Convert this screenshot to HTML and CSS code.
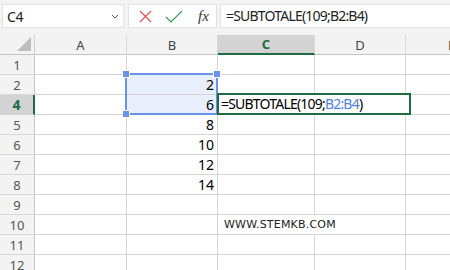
FILE: index.html
```html
<!DOCTYPE html>
<html lang="it">
<head>
  <meta charset="UTF-8">
  <title>SUBTOTALE</title>
  <link rel="stylesheet" href="styles.css">
</head>
<body>

  <div class="toolbar">
    <div class="namebox">
      <span>C4</span>
      <svg class="chevron" width="8" height="5" viewBox="0 0 8 5"><path d="M1 1 L4 4 L7 1" fill="none" stroke="#555" stroke-width="1"/></svg>
    </div>
    <div class="fxbox">
      <svg width="13" height="13" viewBox="0 0 13 13"><path d="M1 1 L12 12 M12 1 L1 12" stroke="#e8474f" stroke-width="1.1" fill="none"/></svg>
      <svg width="18" height="13" viewBox="0 0 18 13"><path d="M1 7 L6 12 L17 1" stroke="#2f9e55" stroke-width="1.1" fill="none"/></svg>
      <span class="fx">fx</span>
    </div>
    <div class="formula">=SUBTOTALE(109;B2:B4)</div>
  </div>

  <div class="sheet">
    <div class="grid">
      <div class="corner"></div>
      <div class="colhead">A</div>
      <div class="colhead">B</div>
      <div class="colhead active">C</div>
      <div class="colhead">D</div>
      <div class="colhead last">E</div>

      <div class="rowhead">1</div><div class="cell"></div><div class="cell"></div><div class="cell"></div><div class="cell"></div><div class="cell last"></div>
      <div class="rowhead">2</div><div class="cell"></div><div class="cell num sel">2</div><div class="cell"></div><div class="cell"></div><div class="cell last"></div>
      <div class="rowhead active">4</div><div class="cell"></div><div class="cell num sel">6</div><div class="cell"></div><div class="cell"></div><div class="cell last"></div>
      <div class="rowhead">5</div><div class="cell"></div><div class="cell num">8</div><div class="cell"></div><div class="cell"></div><div class="cell last"></div>
      <div class="rowhead">6</div><div class="cell"></div><div class="cell num">10</div><div class="cell"></div><div class="cell"></div><div class="cell last"></div>
      <div class="rowhead">7</div><div class="cell"></div><div class="cell num">12</div><div class="cell"></div><div class="cell"></div><div class="cell last"></div>
      <div class="rowhead">8</div><div class="cell"></div><div class="cell num">14</div><div class="cell"></div><div class="cell"></div><div class="cell last"></div>
      <div class="rowhead">9</div><div class="cell"></div><div class="cell"></div><div class="cell"></div><div class="cell"></div><div class="cell last"></div>
      <div class="rowhead">10</div><div class="cell"></div><div class="cell"></div><div class="cell site">WWW.STEMKB.COM</div><div class="cell last"></div>
      <div class="rowhead">11</div><div class="cell"></div><div class="cell"></div><div class="cell"></div><div class="cell"></div><div class="cell last"></div>
      <div class="rowhead">12</div><div class="cell"></div><div class="cell"></div><div class="cell"></div><div class="cell"></div><div class="cell last"></div>
    </div>

    <div class="range">
      <span class="handle tl"></span>
      <span class="handle tr"></span>
      <span class="handle bl"></span>
    </div>

    <div class="editor">=SUBTOTALE(109;<span class="ref">B2:B4</span>)</div>
  </div>

</body>
</html>
```

FILE: styles.css
```css
body {
  margin: 0;
  width: 450px;
  height: 270px;
  overflow: hidden;
  background-color: #ffffff;
  font-family: "Noto Sans", "Open Sans", sans-serif;
  color: #000;
}
.toolbar {
  display: flex;
  align-items: flex-start;
  height: 35px;
  padding-top: 4px;
  box-sizing: border-box;
  background-color: #f3f3f3;
}
.namebox {
  display: flex;
  align-items: center;
  justify-content: space-between;
  width: 122px;
  height: 24px;
  margin-left: 2px;
  padding: 0 4px 0 4px;
  box-sizing: border-box;
  background-color: #fff;
  border: 1px solid #e3e3e3;
  font-size: 14px;
  letter-spacing: -0.4px;
  color: #222;
}
.chevron {
  margin-top: 1px;
}
.fxbox {
  display: flex;
  align-items: center;
  width: 89px;
  height: 24px;
  margin-left: 4px;
  padding-left: 10px;
  box-sizing: border-box;
  gap: 13px;
  background-color: #fff;
  border: 1px solid #e3e3e3;
}
.fx {
  margin-left: 2px;
  font-family: "Liberation Serif", serif;
  font-style: italic;
  font-size: 15px;
  color: #333;
}
.formula {
  flex: 1;
  height: 24px;
  margin-left: 3px;
  padding-left: 5px;
  box-sizing: border-box;
  background-color: #fff;
  border: 1px solid #e3e3e3;
  border-right: none;
  font-size: 14px;
  letter-spacing: -0.8px;
  line-height: 22px;
  color: #222;
}
.sheet {
  position: relative;
}
.grid {
  display: grid;
  grid-template-columns: 35px 92px 91px 97px 91px 91px;
  grid-auto-rows: 20px;
}
.corner {
  position: relative;
  background-color: #f3f3f3;
  border-right: 1px solid #d0d0d0;
  border-bottom: 1px solid #c4c4c4;
}
.corner::after {
  content: "";
  position: absolute;
  right: 3px;
  bottom: 3px;
  border-left: 14px solid transparent;
  border-bottom: 14px solid #bdbdbd;
}
.colhead {
  display: flex;
  align-items: center;
  justify-content: center;
  background-color: #f3f3f3;
  border-right: 1px solid #d8d8d8;
  border-bottom: 1px solid #c4c4c4;
  font-size: 13px;
  color: #444;
}
.colhead.active {
  background-color: #d3d3d3;
  border-bottom: 2px solid #1d6b40;
  color: #1d6b40;
  font-weight: bold;
}
.rowhead {
  display: flex;
  align-items: center;
  justify-content: center;
  background-color: #f3f3f3;
  border-right: 1px solid #c4c4c4;
  border-bottom: 1px solid #d8d8d8;
  font-size: 13px;
  color: #555;
}
.rowhead.active {
  background-color: #d3d3d3;
  border-right: 2px solid #1d6b40;
  color: #1d6b40;
  font-weight: bold;
  font-size: 14px;
}
.cell {
  border-right: 1px solid #d4d4d4;
  border-bottom: 1px solid #d4d4d4;
  font-size: 14px;
  line-height: 20px;
}
.last {
  border-right: none;
}
.num {
  text-align: right;
  padding-right: 3px;
}
.sel {
  background-color: #e8eefb;
}
.site {
  grid-column: span 2;
  padding-left: 6px;
  font-family: "DejaVu Sans", sans-serif;
  font-size: 11px;
  color: #222;
  letter-spacing: 0.2px;
}
.range {
  position: absolute;
  left: 125px;
  top: 38px;
  width: 93px;
  height: 42px;
  box-sizing: border-box;
  border: 2px solid #6892eb;
}
.handle {
  position: absolute;
  width: 6px;
  height: 6px;
  background-color: #6892eb;
  border: 1px solid #fff;
}
.handle.tl {
  left: -5px;
  top: -5px;
}
.handle.tr {
  right: -5px;
  top: -5px;
}
.handle.bl {
  left: -5px;
  bottom: -5px;
}
.editor {
  position: absolute;
  left: 217px;
  top: 58px;
  width: 194px;
  height: 22px;
  padding-left: 2px;
  box-sizing: border-box;
  background-color: #fff;
  border: 2px solid #1d6b40;
  font-size: 14px;
  letter-spacing: -0.8px;
  line-height: 18px;
  color: #000;
}
.ref {
  color: #4f81e0;
}
```
